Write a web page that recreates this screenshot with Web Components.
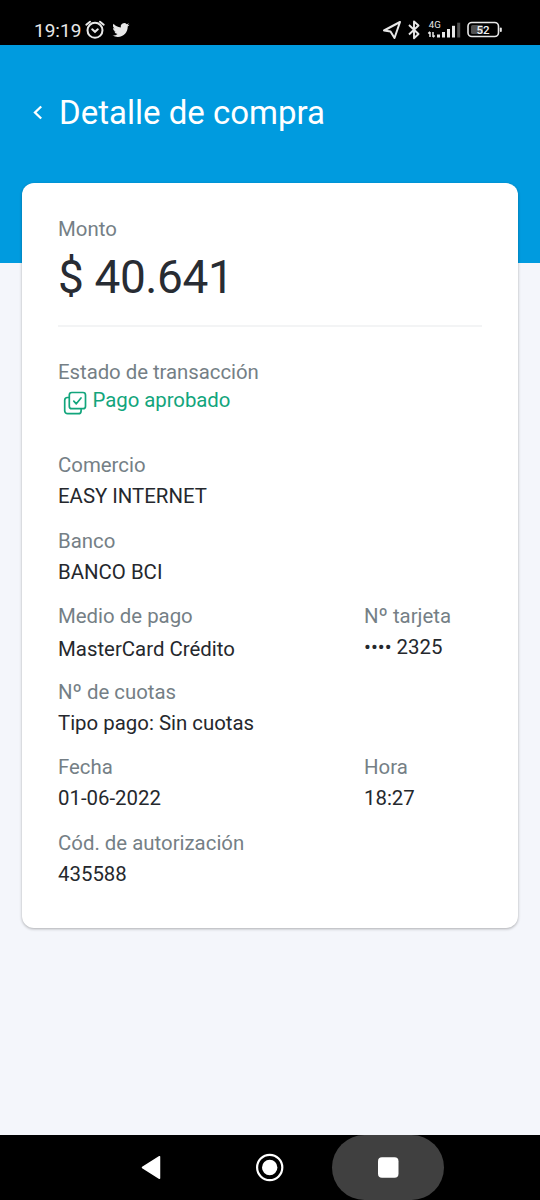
<!DOCTYPE html>
<html lang="es">
<head>
<meta charset="utf-8">
<title>Detalle de compra</title>
<style>
html, body { margin: 0; height: 100%; background: #f4f6fb; }
body { font-family: Roboto, "Liberation Sans", sans-serif; }
</style>
</head>
<body>
<purchase-screen></purchase-screen>
<script>
function define(name, html) {
  const template = document.createElement('template');
  template.innerHTML = html;
  customElements.define(name, class extends HTMLElement {
    constructor() {
      super();
      this.attachShadow({ mode: 'open' }).append(template.content.cloneNode(true));
    }
  });
}

define('status-bar', `
<style>
:host { display: flex; box-sizing: border-box; height: 45px; background: #000; color: #e8e8e8; padding: 15px 37px 0 34px; align-items: flex-start; justify-content: space-between; }
div { display: flex; height: 30px; }
.time { font-size: 19px; line-height: 31px; height: 30px; width: 50px; white-space: nowrap; }
svg { display: block; flex: none; }
</style>
<div>
  <span class="time">19:19</span>
  <svg width="50" height="30" viewBox="84 15 50 30">
    <g fill="none" stroke="#e8e8e8" stroke-width="2" stroke-linecap="round">
      <circle cx="95" cy="30.300" r="7.500"/><path d="M86.300 24.700 90 21.700M103.700 24.700 100 21.700M92.200 29.300 95 31.800 97.800 29.300"/>
    </g>
    <g transform="translate(112.400 21.500) scale(.71)"><path fill="#e8e8e8" d="M23.950 4.570a10 10 0 0 1-2.820.770 4.960 4.960 0 0 0 2.160-2.720c-.950.560-2 .960-3.130 1.180a4.920 4.920 0 0 0-8.380 4.480C7.690 8.090 4.070 6.130 1.640 3.160a4.920 4.920 0 0 0 1.520 6.570 4.900 4.900 0 0 1-2.230-.610v.060a4.920 4.920 0 0 0 3.950 4.830 5 5 0 0 1-2.210.080 4.940 4.940 0 0 0 4.600 3.420A9.870 9.870 0 0 1 0 19.540a14 14 0 0 0 7.550 2.210c9.050 0 14-7.500 14-13.980 0-.210 0-.420-.020-.630a9.940 9.940 0 0 0 2.460-2.550z"/></g>
  </svg>
</div>
<svg width="123" height="30" viewBox="380 15 123 30">
  <path d="M400 22 384 30.500 390.500 31.500 394.500 38Z" fill="none" stroke="#e8e8e8" stroke-width="2" stroke-linejoin="round"/>
  <path d="M409 25 418.500 34 414 38.300V21.500L418.500 25.500 409 34.500" fill="none" stroke="#e8e8e8" stroke-width="1.900" stroke-linejoin="round"/>
  <text x="428.800" y="28" font-size="9.600" fill="#e8e8e8">4G</text>
  <path d="M430 32v5M428.300 33.600 430 31.800M433 32v5M434.700 35.400 433 37.200" fill="none" stroke="#e8e8e8" stroke-width="1.500"/>
  <g fill="#e8e8e8"><rect x="437" y="34.500" width="3" height="3"/><rect x="442" y="32" width="3" height="5.500"/><rect x="447" y="29" width="3" height="8.500"/><rect x="452" y="25.800" width="3" height="11.700"/><rect x="457.200" y="22.700" width="3" height="14.800" fill="#505050"/></g>
  <rect x="468" y="22.500" width="30.500" height="14" rx="3.800" fill="none" stroke="#e8e8e8" stroke-width="1.600"/>
  <rect x="471" y="25" width="12" height="9" rx="1.500" fill="#505050"/>
  <rect x="499.800" y="27.500" width="2" height="4.500" rx="1" fill="#e8e8e8"/>
  <text x="483" y="33.900" font-size="11.500" font-weight="500" text-anchor="middle" fill="#f2f2f2">52</text>
</svg>`);

define('page-header', `
<style>
:host { display: flex; box-sizing: border-box; height: 218px; background: #009bdf; color: #fff; padding: 47px 0 0 32px; align-items: flex-start; }
svg { display: block; width: 27px; height: 40px; }
.title { font-size: 33px; line-height: 42px; white-space: nowrap; }
</style>
<svg viewBox="32 92 27 40"><path d="M41.200 106.500 35 112.500 41.200 118.500" fill="none" stroke="#fff" stroke-width="2.300"/></svg>
<span class="title"><slot></slot></span>`);

define('detail-field', `
<style>
:host { display: block; box-sizing: border-box; height: 75.500px; font-size: 20.400px; line-height: 31px; white-space: nowrap; }
.label { color: #757f86; }
.value { color: #25282d; margin-top: var(--value-shift, 0); }
</style>
<div class="label"><slot name="label"></slot></div>
<div class="value"><slot></slot></div>`);

define('amount-block', `
<style>
:host { display: block; box-sizing: border-box; height: 144px; padding-top: 31px; border-bottom: 2px solid #f3f4f5; white-space: nowrap; }
.label { font-size: 20.400px; line-height: 31px; color: #757f86; }
.amount { font-size: 46px; line-height: 60px; color: #282c33; margin-top: 2px; letter-spacing: -.4px; }
</style>
<div class="label"><slot name="label"></slot></div>
<div class="amount"><slot></slot></div>`);

define('payment-status', `
<style>
:host { display: block; box-sizing: border-box; height: 123.100px; padding-top: 29.500px; font-size: 20.400px; white-space: nowrap; }
.label { line-height: 31px; color: #757f86; letter-spacing: -.05px; }
.status { display: flex; line-height: 24px; color: #12a57c; padding-left: 5px; letter-spacing: -.05px; }
svg { display: block; width: 29.500px; height: 29px; margin-top: 1px; }
</style>
<div class="label"><slot name="label"></slot></div>
<div class="status">
  <svg viewBox="63 388 29.500 29"><g fill="none" stroke="#12a57c" stroke-width="1.700" stroke-linecap="round" stroke-linejoin="round"><rect x="69.300" y="391.500" width="16.200" height="16.200" rx="2.500"/><path d="M69 396.500h-1.500a2.800 2.800 0 0 0-2.800 2.800v10.400a3 3 0 0 0 3 3h10.600a2.800 2.800 0 0 0 2.800-2.800v-1.500M73.800 400.200 76.300 402.800 81 397"/></g></svg>
  <span><slot></slot></span>
</div>`);

define('purchase-card', `
<style>
:host { display: block; box-sizing: border-box; margin: -80px 22px 0; height: 745px; padding: 0 36px; background: #fff; border-radius: 12px; box-shadow: 0 1px 3px rgba(0,0,0,.3); position: relative; }
</style>
<slot></slot>`);

define('field-row', `
<style>:host { display: grid; grid-template-columns: 306px 1fr; }</style>
<slot></slot>`);

define('nav-bar', `
<style>
:host { display: block; height: 65px; background: #000; }
svg { display: block; }
</style>
<svg width="540" height="65" viewBox="0 1135 540 65">
  <rect x="332" y="1135" width="112" height="65" rx="32.500" fill="#404040"/>
  <path d="M142.500 1167.500 159.500 1156.700V1178.300Z" fill="#fff" stroke="#fff" stroke-width="1.500" stroke-linejoin="round"/>
  <circle cx="269.700" cy="1167.500" r="12.600" fill="none" stroke="#fff" stroke-width="2.200"/>
  <circle cx="269.700" cy="1167.500" r="7.700" fill="#fff"/>
  <rect x="378" y="1157.300" width="20.500" height="20.500" rx="4" fill="#fff"/>
</svg>`);

define('purchase-screen', `
<style>
:host { display: flex; flex-direction: column; width: 540px; height: 1200px; background: #f4f6fb; overflow: hidden; }
nav-bar { margin-top: auto; }
</style>
<status-bar></status-bar>
<page-header>Detalle de compra</page-header>
<purchase-card>
  <amount-block><span slot="label">Monto</span>$ 40.641</amount-block>
  <payment-status><span slot="label">Estado de transacción</span>Pago aprobado</payment-status>
  <detail-field><span slot="label">Comercio</span>EASY INTERNET</detail-field>
  <detail-field><span slot="label">Banco</span>BANCO BCI</detail-field>
  <field-row>
    <detail-field style="--value-shift: 1.500px"><span slot="label">Medio de pago</span>MasterCard Crédito</detail-field>
    <detail-field><span slot="label">Nº tarjeta</span>•••• 2325</detail-field>
  </field-row>
  <detail-field><span slot="label">Nº de cuotas</span>Tipo pago: Sin cuotas</detail-field>
  <field-row>
    <detail-field><span slot="label">Fecha</span>01-06-2022</detail-field>
    <detail-field><span slot="label">Hora</span>18:27</detail-field>
  </field-row>
  <detail-field><span slot="label">Cód. de autorización</span>435588</detail-field>
</purchase-card>
<nav-bar></nav-bar>`);
</script>
</body>
</html>
